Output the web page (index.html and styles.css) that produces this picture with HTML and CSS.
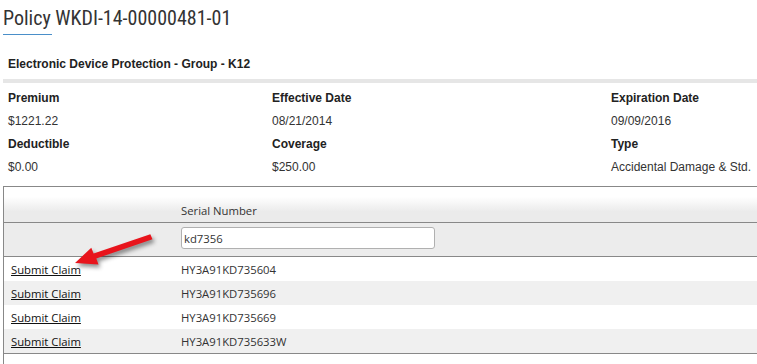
FILE: index.html
```html
<!DOCTYPE html>
<html>
<head>
<meta charset="utf-8">
<link rel="stylesheet" href="styles.css">
</head>
<body>
<div class="page">
  <h1 class="title">Policy WKDI-14-00000481-01</h1>
  <div class="title-rule"></div>
  <div class="product">Electronic Device Protection - Group - <b>K12</b></div>
  <div class="bar"></div>
  <div class="info">
    <div class="col">
      <div class="lbl">Premium</div>
      <div class="val">$1221.22</div>
      <div class="lbl">Deductible</div>
      <div class="val">$0.00</div>
    </div>
    <div class="col">
      <div class="lbl">Effective Date</div>
      <div class="val">08/21/2014</div>
      <div class="lbl">Coverage</div>
      <div class="val">$250.00</div>
    </div>
    <div class="col">
      <div class="lbl">Expiration Date</div>
      <div class="val">09/09/2016</div>
      <div class="lbl">Type</div>
      <div class="val">Accidental Damage &amp; Std.</div>
    </div>
  </div>
  <div class="grid">
    <div class="row head">
      <div class="c1"></div>
      <div class="c2">Serial Number</div>
    </div>
    <div class="row filter">
      <div class="c1"></div>
      <div class="c2"><input class="search" type="text" value="kd7356"></div>
    </div>
    <div class="row">
      <div class="c1"><a href="#">Submit Claim</a></div>
      <div class="c2">HY3A91KD735604</div>
    </div>
    <div class="row alt">
      <div class="c1"><a href="#">Submit Claim</a></div>
      <div class="c2">HY3A91KD735696</div>
    </div>
    <div class="row">
      <div class="c1"><a href="#">Submit Claim</a></div>
      <div class="c2">HY3A91KD735669</div>
    </div>
    <div class="row alt last">
      <div class="c1"><a href="#">Submit Claim</a></div>
      <div class="c2">HY3A91KD735633W</div>
    </div>
    <div class="tail"></div>
    <svg class="arrow" width="90" height="45" viewBox="70 230 90 45">
      <polygon fill="#e8141c" points="149.3,234.2 151.5,239.2 95.3,258.6 97.5,264.5 74,263 90.3,247.8 92.6,253.4"/>
    </svg>
  </div>
</div>
</body>
</html>
```

FILE: styles.css
```css
html, body {
  margin: 0;
  padding: 0;
  background: #fff;
  overflow: hidden;
}
.page {
  position: relative;
  width: 757px;
  height: 364px;
  padding-left: 3px;
  box-sizing: border-box;
  font-family: "Liberation Sans", Arial, sans-serif;
  color: #333;
}
.title {
  margin: 6px 0 0 0;
  font-family: Roboto, sans-serif;
  font-weight: 400;
  font-size: 20px;
  font-stretch: 85%;
  line-height: 24px;
  color: #333;
}
.title-rule {
  margin-top: 4px;
  width: 49px;
  height: 1px;
  background: #4a8fc9;
}
.product {
  margin-top: 22px;
  padding-left: 5px;
  font-size: 12px;
  line-height: 14px;
  font-weight: bold;
  color: #222;
}
.bar {
  margin-top: 8px;
  height: 4px;
  background: #e6e6e6;
}
.info {
  display: grid;
  grid-template-columns: 264px 339px 1fr;
  padding: 4px 0 0 5px;
  font-size: 12px;
  line-height: 23px;
}
.lbl {
  font-weight: bold;
  color: #222;
}
.val {
  color: #333;
}
.grid {
  position: relative;
  margin-top: 7px;
  border-top: 1px solid #888;
  border-left: 1px solid #888;
  font-family: "Open Sans", "Noto Sans", sans-serif;
  font-size: 11.3px;
  color: #333;
}
.row {
  display: flex;
  align-items: center;
  height: 24px;
  background: #fff;
}
.row.alt {
  background: #f0f0f0;
}
.row.head {
  height: 35px;
  align-items: flex-end;
  border-bottom: 1px solid #888;
  background: linear-gradient(#fff 0, #fff 28%, #ebebeb 70%, #ebebeb 100%);
}
.row.head .c2 {
  padding-bottom: 4px;
}
.row.filter {
  height: 33px;
  background: #ececec;
  border-bottom: 1px solid #888;
}
.row.last {
  border-bottom: 1px solid #888;
}
.c1 {
  box-sizing: border-box;
  width: 170px;
  padding-left: 7px;
  flex: none;
}
.c2 {
  padding-left: 7px;
}
.c1 a {
  color: #111;
  text-decoration: underline;
}
.search {
  display: block;
  box-sizing: border-box;
  width: 254px;
  height: 22px;
  margin: 0 0 3px 0;
  padding: 0 2px;
  border: 1px solid #b0b0b0;
  border-radius: 3px;
  background: #fff;
  font-family: "Open Sans", "Noto Sans", sans-serif;
  font-size: 11.3px;
  color: #333;
}
.tail {
  height: 20px;
}
.arrow {
  position: absolute;
  left: 67px;
  top: 43px;
  filter: drop-shadow(2px 3px 2px rgba(0, 0, 0, 0.45));
  overflow: visible;
}
```
